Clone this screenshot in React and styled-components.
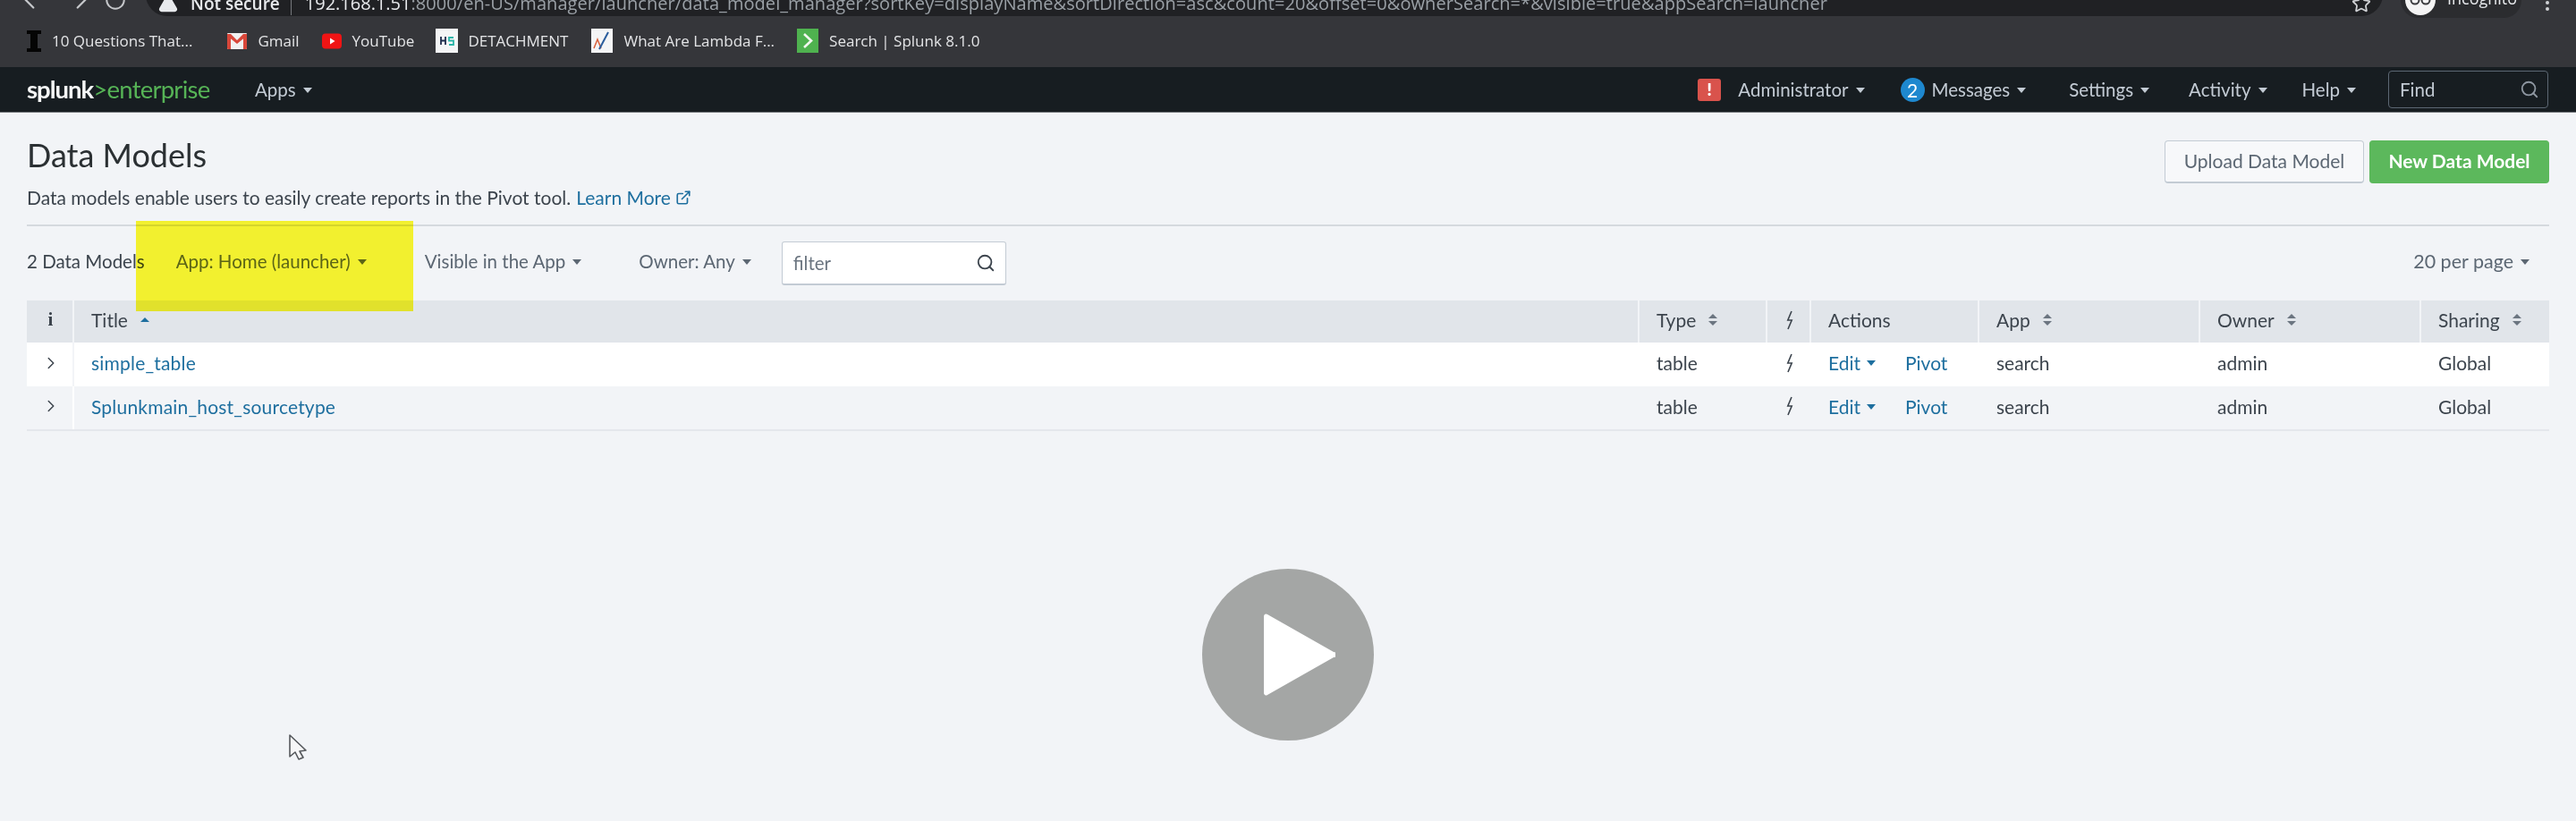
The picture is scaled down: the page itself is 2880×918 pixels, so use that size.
import React from "react";
import styled, { createGlobalStyle } from "styled-components";
import { Search, ExternalLink, ChevronRight, ChevronLeft, RotateCw, Star, MoreVertical, TriangleAlert } from "lucide-react";

const Global = createGlobalStyle`
  html, body { margin: 0; padding: 0; background: #f2f4f7; }
  body { font-family: Lato, "Open Sans", sans-serif; overflow: hidden; }
  * { box-sizing: border-box; }
`;
const Page = styled.div`
  position: relative; width: 2880px; height: 918px; overflow: hidden; background: #f2f4f7;
  filter: blur(0.55px);
`;
const BrowserTop = styled.div`
  height: 20px; background: #35363a; display: flex; align-items: flex-end; overflow: hidden; padding-left: 16px; color: #d5d7da;
`;
const NavBtn = styled.div`
  width: ${p => p.$w}px; flex: none; height: 30px; margin-bottom: 5px; display: flex; align-items: center; color: #c6c8cb;
`;
const UrlPill = styled.div`
  flex: none; width: 2501px; height: 48px; margin-bottom: 2px; background: #202124; border-radius: 24px;
  display: flex; align-items: flex-end; padding: 0 0 9px 14px; position: relative; font: 19px "Open Sans", sans-serif; line-height: 10px; color: #9aa0a6;
`;
const UrlInner = styled.div`
  display: flex; align-items: center; height: 10px; white-space: nowrap; width: 2420px; overflow: visible;
`;
const Secure = styled.span` color: #e8eaed; font-weight: 600; margin-left: 14px; `;
const Bar = styled.span` width: 1px; height: 26px; background: #75787c; margin: 0 15px 0 12px; flex: none; `;
const Host = styled.b` color: #e8eaed; font-weight: 400; font-size: 20px; `;
const UrlRest = styled.span` font-size: 20px; letter-spacing: 0.06px; `;
const StarSlot = styled.div` position: absolute; right: 13px; bottom: 3px; height: 22px; color: #cfd1d4; `;
const IncogPill = styled.div`
  flex: none; margin-left: 20px; width: 135px; height: 40px; background: #2b2c2f; border-radius: 20px; display: flex; align-items: flex-end; padding: 0 0 12px 5px; gap: 13px; font: 18px "Open Sans", sans-serif; color: #e8eaed; line-height: 20px;
`;
const IncogIcon = styled.div` width: 34px; height: 34px; background: #f4f4f4; border-radius: 50%; flex: none; display: flex; align-items: center; justify-content: center; margin-bottom: -9px; `;
const Dots = styled.div` flex: none; margin: 0 0 5px 17px; height: 24px; color: #d0d2d5; `;

const Bookmarks = styled.div`
  height: 55px; background: #35363a; display: flex; align-items: center; padding: 0 0 4px 30px; font: 17px "Open Sans", sans-serif; color: #e3e4e6;
`;
const Mark = styled.div` display: flex; align-items: center; gap: ${p => p.$gap || 12}px; margin-right: ${p => p.$mr}px; white-space: nowrap; `;

const Nav = styled.div`
  height: 51px; background: #171d21; border-bottom: 1px solid #74787c; display: flex; align-items: center; padding: 0 31px 0 30px; color: #c3cbd4; font-size: 20.5px;
`;
const Logo = styled.div` font: 27.5px Lato, sans-serif; letter-spacing: -0.75px; color: #56b356; width: 255px; flex: none; white-space: nowrap; margin-top: -2px; `;
const LogoWord = styled.b` color: #f5f6f6; font-weight: 700; letter-spacing: -1px; `;
const NavItem = styled.div` display: flex; align-items: center; gap: 8px; margin-right: ${p => p.$mr || 41}px; white-space: nowrap; `;
const Caret = styled.i`
  display: block; flex: none; width: 0; height: 0; border-left: 5.5px solid transparent; border-right: 5.5px solid transparent;
  border-top: 6.5px solid currentColor; margin-top: 1px;
`;
const Spacer = styled.div` flex: 1; `;
const Alert = styled.div` width: 26px; height: 25px; background: #d9534c; border-radius: 3px; color: #fff; font: 800 18px Lato, sans-serif; display: flex; align-items: center; justify-content: center; margin-right: 19px; `;
const Count = styled.div` width: 27px; height: 27px; background: #1e88cf; border-radius: 50%; color: #fff; font-size: 21px; display: flex; align-items: center; justify-content: center; margin-right: 8px; `;
const Find = styled.div` width: 179px; height: 42px; border: 1px solid #5c6773; border-radius: 4px; margin-left: -5px; display: flex; align-items: center; justify-content: space-between; padding: 0 9px 0 12px; color: #c3cbd4; `;

const Main = styled.div` padding: 31px 30px 0; color: #3c444d; `;
const Head = styled.div` display: flex; justify-content: space-between; align-items: flex-start; height: 96px; border-bottom: 2px solid #d5d9de; `;
const Title = styled.h1` margin: 0; font: 400 36px/32px Lato, sans-serif; color: #2b3033; `;
const Desc = styled.p` margin: 17px 0 0; font-size: 21px; line-height: 30px; color: #3c444d; display: flex; align-items: center; gap: 6px; `;
const Link = styled.a` color: #1e6f9f; display: inline-flex; align-items: center; gap: 5px; `;
const Buttons = styled.div` display: flex; gap: 6px; `;
const Btn = styled.div`
  height: 48px; width: ${p => p.$w}px; border-radius: 4px; display: flex; align-items: center; justify-content: center; padding-bottom: 2px; font-size: 21px;
  background: ${p => p.$primary ? "#5cb85c" : "#f7f8fa"}; color: ${p => p.$primary ? "#fff" : "#5c6773"}; font-weight: ${p => p.$primary ? 700 : 400};
  border: 1px solid ${p => p.$primary ? "#5cb85c" : "#c3cbd4"}; border-bottom-width: 2px;
`;
const Filters = styled.div` display: flex; align-items: flex-start; height: 83px; padding-top: 24px; color: #5c6773; font-size: 20.5px; `;
const FilterText = styled.div` line-height: 30px; white-space: nowrap; display: flex; align-items: center; gap: 8px; margin-right: ${p => p.$mr}px; color: ${p => p.$c || "inherit"}; font-size: ${p => p.$fs || 20.5}px; `;
const FilterInput = styled.div` width: 251px; height: 49px; margin-top: -7px; background: #fff; border: 1px solid #c3cbd4; border-bottom-width: 2px; border-radius: 3px; display: flex; align-items: center; justify-content: space-between; padding: 0 11px 0 12px; color: #6b7580; `;
const Row = styled.div`
  display: grid; grid-template-columns: 53px 1750px 143px 49px 188px 247px 247px 143px; align-items: stretch;
  height: ${p => p.$h}px; background: ${p => p.$bg}; border-bottom: ${p => p.$line ? "2px solid #e4e7ec" : "none"};
`;
const Cell = styled.div`
  display: flex; align-items: center; padding: 0 0 4px ${p => p.$pl ?? 19}px; gap: ${p => p.$gap || 14}px; font-size: 21px; color: #3c444d; white-space: nowrap;
  border-left: ${p => p.$sep ? `2px solid ${p.$sep}` : "none"}; margin-left: ${p => p.$sep ? "-2px" : 0};
  justify-content: ${p => p.$center ? "center" : "flex-start"};
`;
const RowLink = styled.a` color: #1e6f9f; display: inline-flex; align-items: center; gap: 7px; `;
const NameLink = styled(RowLink)` letter-spacing: 0.2px; `;
const Sort = styled.span` display: inline-flex; flex-direction: column; gap: 3px; color: #6b7580; `;
const Tri = styled.i`
  display: block; width: 0; height: 0; border-left: 5px solid transparent; border-right: 5px solid transparent;
  color: ${p => p.$c || "inherit"};
  ${p => p.$down ? "border-top: 5.5px solid currentColor;" : "border-bottom: 5.5px solid currentColor;"}
`;
const InfoI = styled.span` font: 700 21px "Liberation Serif", serif; color: #3c444d; `;
const Highlight = styled.div` position: absolute; left: 152px; top: 247px; width: 310px; height: 101px; background: #fffb30; mix-blend-mode: multiply; `;
const Play = styled.div` position: absolute; left: 1344px; top: 636px; width: 192px; height: 192px; border-radius: 50%; background: #a4a6a5; display: flex; align-items: center; justify-content: center; padding-left: 25px; `;
const Cursor = styled.div` position: absolute; left: 321px; top: 820px; `;

const Bolt = () => (
  <svg width="8" height="22" viewBox="0 0 8 22" fill="none"><path d="M6 1 1.800 11h4.400L2 21" stroke="#3c444d" strokeWidth="1.600" /></svg>
);
const SortIcon = () => <Sort><Tri /><Tri $down /></Sort>;
const Icon = styled.span` display: block; flex: none; width: ${p => p.$w || 24}px; height: ${p => p.$h || 24}px; `;

const Gmail = () => (
  <svg width="24" height="20" viewBox="0 0 24 20"><rect x="1" y="1" width="22" height="18" rx="1" fill="#f1f1f1"/><path d="M1 2h4l7 7 7-7h4v2L12 13 1 4z" fill="#d8473a"/><path d="M1 3l4 3v13H2a1 1 0 0 1-1-1zM23 3l-4 3v13h3a1 1 0 0 0 1-1z" fill="#d8473a"/></svg>
);
const YouTube = () => (
  <svg width="22" height="18" viewBox="0 0 22 18"><rect width="22" height="17" y="0.500" rx="4" fill="#f01414"/><path d="M9 5.500v7l5.500-3.500z" fill="#fff"/></svg>
);
const HS = () => (
  <svg width="25" height="27" viewBox="0 0 25 27"><rect width="25" height="27" fill="#f4f5f6"/><path d="M6 9v9M11 9v9M6 13.500h5" stroke="#1d2c4c" strokeWidth="1.800"/><path d="M20 10h-5v3.500h5V18h-5" stroke="#2cb5a8" strokeWidth="1.800" fill="none"/></svg>
);
const Chart = () => (
  <svg width="24" height="27" viewBox="0 0 24 27"><rect width="24" height="27" fill="#f4f5f6"/><path d="M3 22 7 12l4 10" stroke="#d9603b" strokeWidth="1.500" fill="none"/><path d="M9 23 19 4" stroke="#2a5d9c" strokeWidth="2" fill="none"/></svg>
);
const GreenArrow = () => (
  <svg width="24" height="27" viewBox="0 0 24 27"><rect width="24" height="27" fill="#4fb24f"/><path d="M8 6l8 7.500L8 21" stroke="#f2f7ef" strokeWidth="2.600" fill="none"/></svg>
);
const Book = () => (
  <svg width="16" height="24" viewBox="0 0 16 24"><path d="M0 0h16v4h-4v16h4v4H0v-4h4V4H0z" fill="#050505"/></svg>
);
const Glasses = () => (
  <svg width="26" height="16" viewBox="0 0 26 16" fill="none" stroke="#3a3b3e" strokeWidth="2"><circle cx="7" cy="8" r="4.500"/><circle cx="19" cy="8" r="4.500"/><path d="M11 7q2-1.500 4 0"/></svg>
);

const rows = [
  { name: "simple_table", bg: "#fff", sep: "#f2f4f7" },
  { name: "Splunkmain_host_sourcetype", bg: "#f2f4f7", sep: "#fff", line: true },
];

export default function App() {
  return (
    <>
      <Global />
      <Page>
        <BrowserTop>
          <NavBtn $w={58}><ChevronLeft size={34} strokeWidth={1.6} /></NavBtn>
          <NavBtn $w={42}><ChevronRight size={34} strokeWidth={1.6} /></NavBtn>
          <NavBtn $w={47}><RotateCw size={26} strokeWidth={1.8} /></NavBtn>
          <UrlPill>
            <UrlInner>
              <TriangleAlert size={22} fill="#e8eaed" color="#e8eaed" />
              <Secure>Not secure</Secure>
              <Bar />
              <Host>192.168.1.51</Host>
              <UrlRest>:8000/en-US/manager/launcher/data_model_manager?sortKey=displayName&amp;sortDirection=asc&amp;count=20&amp;offset=0&amp;ownerSearch=*&amp;visible=true&amp;appSearch=launcher</UrlRest>
            </UrlInner>
            <StarSlot><Star size={22} /></StarSlot>
          </UrlPill>
          <IncogPill>
            <IncogIcon><Glasses /></IncogIcon>
            Incognito
          </IncogPill>
          <Dots><MoreVertical size={24} /></Dots>
        </BrowserTop>
        <Bookmarks>
          <Mark $mr={38}><Icon $w={16}><Book /></Icon>10 Questions That...</Mark>
          <Mark $mr={25} $gap={11}><Gmail />Gmail</Mark>
          <Mark $mr={24}><YouTube />YouTube</Mark>
          <Mark $mr={26} $gap={11}><HS />DETACHMENT</Mark>
          <Mark $mr={25}><Chart />What Are Lambda F...</Mark>
          <Mark><GreenArrow />Search | Splunk 8.1.0</Mark>
        </Bookmarks>
        <Nav>
          <Logo><LogoWord>splunk</LogoWord>&gt;enterprise</Logo>
          <NavItem>Apps<Caret /></NavItem>
          <Spacer />
          <Alert>!</Alert>
          <NavItem $mr={40}>Administrator<Caret /></NavItem>
          <Count>2</Count>
          <NavItem $mr={48}>Messages<Caret /></NavItem>
          <NavItem $mr={44}>Settings<Caret /></NavItem>
          <NavItem $mr={39}>Activity<Caret /></NavItem>
          <NavItem>Help<Caret /></NavItem>
          <Find>Find<Search size={22} color="#8d96a0" /></Find>
        </Nav>
        <Main>
          <Head>
            <div>
              <Title>Data Models</Title>
              <Desc>
                Data models enable users to easily create reports in the Pivot tool.
                <Link>Learn More <ExternalLink size={18} strokeWidth={2.2} /></Link>
              </Desc>
            </div>
            <Buttons>
              <Btn $w={223}>Upload Data Model</Btn>
              <Btn $w={201} $primary>New Data Model</Btn>
            </Buttons>
          </Head>
          <Filters>
            <FilterText $mr={35} $c="#3c444d">2 Data Models</FilterText>
            <FilterText $mr={65}>App: Home (launcher)<Caret /></FilterText>
            <FilterText $mr={64}>Visible in the App<Caret /></FilterText>
            <FilterText $mr={34}>Owner: Any<Caret /></FilterText>
            <FilterInput>filter<Search size={22} color="#3c444d" /></FilterInput>
            <Spacer />
            <FilterText $mr={22} $fs={21.5}>20 per page<Caret /></FilterText>
          </Filters>
          <Row $h={47} $bg="#e1e5ea">
            <Cell $pl={0} $center><InfoI>i</InfoI></Cell>
            <Cell $sep="#f2f4f7">Title<Sort><Tri $c="#1e6f9f" /></Sort></Cell>
            <Cell $sep="#f2f4f7">Type<SortIcon /></Cell>
            <Cell $sep="#f2f4f7" $pl={0} $center><Bolt /></Cell>
            <Cell $sep="#f2f4f7">Actions</Cell>
            <Cell $sep="#f2f4f7">App<SortIcon /></Cell>
            <Cell $sep="#f2f4f7">Owner<SortIcon /></Cell>
            <Cell $sep="#f2f4f7">Sharing<SortIcon /></Cell>
          </Row>
          {rows.map(r => (
            <Row key={r.name} $h={r.line ? 50 : 49} $bg={r.bg} $line={r.line}>
              <Cell $pl={0} $center><ChevronRight size={22} strokeWidth={1.6} color="#3c444d" /></Cell>
              <Cell $sep={r.sep}><NameLink>{r.name}</NameLink></Cell>
              <Cell>table</Cell>
              <Cell $pl={0} $center><Bolt /></Cell>
              <Cell $gap={33}><RowLink>Edit<Caret /></RowLink><RowLink>Pivot</RowLink></Cell>
              <Cell>search</Cell>
              <Cell>admin</Cell>
              <Cell>Global</Cell>
            </Row>
          ))}
        </Main>
        <Highlight />
        <Play>
          <svg width="80" height="92" viewBox="0 0 80 92">
            <path d="M4 1 78 43a3 3 0 0 1 0 6L4 91a2.500 2.500 0 0 1-4-2V3a2.500 2.500 0 0 1 4-2z" fill="#fff" />
          </svg>
        </Play>
        <Cursor>
          <svg width="24" height="32" viewBox="0 0 24 32"><path d="M3 2v24l6-5 4 8 5-2-4-7 7-1z" fill="#f7f7f8" stroke="#55585c" strokeWidth="1.600" strokeLinejoin="round" /></svg>
        </Cursor>
      </Page>
    </>
  );
}
